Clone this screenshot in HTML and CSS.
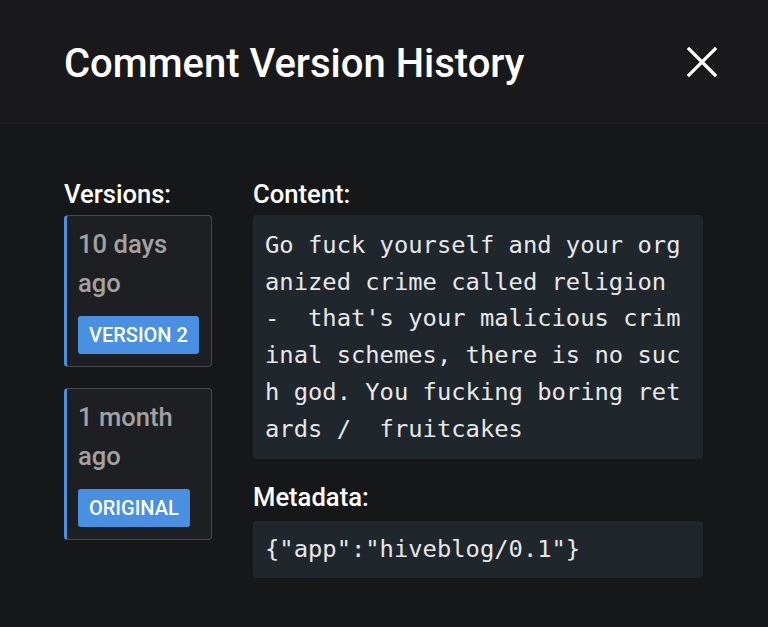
FILE: index.html
```html
<!DOCTYPE html>
<html lang="en">
<head>
    <meta charset="UTF-8">
    <meta name="viewport" content="width=device-width, initial-scale=1.0">
    <title>Comment Version History</title>
    <link rel="stylesheet" href="styles.css">
</head>
<body>

<div class="modal">
    <div class="modal-header">
        <h1>Comment Version History</h1>
        <button class="close-btn" aria-label="Close">
            <svg width="32" height="32" viewBox="0 0 32 32">
                <path d="M3 3 L29 29 M29 3 L3 29" stroke="#fff" stroke-width="3.2" stroke-linecap="square" fill="none"/>
            </svg>
        </button>
    </div>

    <div class="modal-body">
        <div class="versions">
            <h2>Versions:</h2>
            <div class="version-card">
                <div class="version-date">10 days ago</div>
                <span class="badge">Version 2</span>
            </div>
            <div class="version-card">
                <div class="version-date">1 month ago</div>
                <span class="badge">Original</span>
            </div>
        </div>

        <div class="details">
            <h2>Content:</h2>
            <pre class="code-box">Go fuck yourself and your organized crime called religion  -  that's your malicious criminal schemes, there is no such god. You fucking boring retards /  fruitcakes</pre>

            <h2 class="meta-title">Metadata:</h2>
            <pre class="code-box">{"app":"hiveblog/0.1"}</pre>
        </div>
    </div>
</div>

</body>
</html>
```

FILE: styles.css
```css
* {
    box-sizing: border-box;
    margin: 0;
    padding: 0;
}
body {
    font-family: 'Roboto', 'Liberation Sans', sans-serif;
    background-color: #161719;
    color: #fff;
    width: 768px;
    height: 627px;
    overflow: hidden;
}
.modal-header {
    height: 124px;
    background-color: #19191b;
    border-bottom: 1px solid #1f2022;
    display: flex;
    align-items: center;
    justify-content: space-between;
    padding: 0 50px 0 64px;
}
.modal-header h1 {
    font-size: 40px;
    font-weight: 500;
    margin-top: 3px;
}
.close-btn {
    background: none;
    border: none;
    width: 32px;
    height: 32px;
    display: flex;
    align-items: center;
    justify-content: center;
    margin-top: 1px;
}
.modal-body {
    display: flex;
    gap: 41px;
    padding: 55px 65px 0 64px;
}
h2 {
    font-size: 25.6px;
    font-weight: 500;
    line-height: 30px;
    margin-bottom: 6px;
}
.versions {
    width: 148px;
    flex-shrink: 0;
}
.version-card {
    background-color: #1e1f22;
    border: 1px solid #45484d;
    border-left: 3px solid #4a90e2;
    border-radius: 4px;
    padding: 9px 8px 11px 11px;
    height: 152px;
    margin-bottom: 21px;
}
.version-date {
    color: #a2a2a2;
    font-size: 25.6px;
    font-weight: 500;
    line-height: 39px;
}
.badge {
    display: inline-block;
    margin-top: 13px;
    background-color: #4a90e2;
    color: #fff;
    font-size: 20px;
    font-weight: 500;
    text-transform: uppercase;
    line-height: 38px;
    padding: 0 11px;
    border-radius: 3px;
}
.details {
    flex: 1;
}
.code-box {
    background-color: #1f262c;
    border-radius: 4px;
    font-family: 'DejaVu Sans Mono', monospace;
    font-size: 23.8px;
    line-height: 36.7px;
    color: #e8e8e8;
    padding: 12px 12px;
    white-space: pre-wrap;
    word-break: break-all;
}
.meta-title {
    margin-top: 23px;
    margin-bottom: 9px;
}
.meta-title + .code-box {
    padding: 10px 12px;
}
```
